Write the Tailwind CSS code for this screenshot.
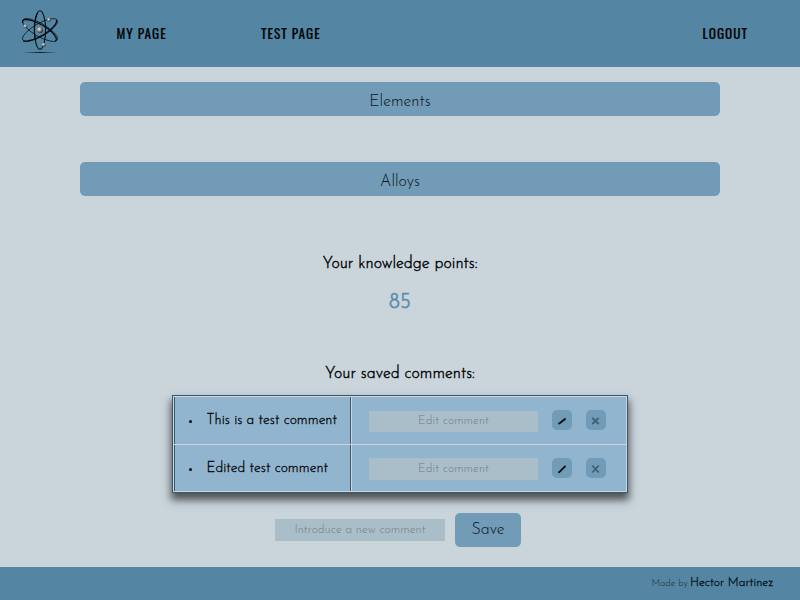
<!DOCTYPE html>
<html lang="en">
<head>
<meta charset="utf-8">
<title>My page</title>
<script src="https://cdn.jsdelivr.net/npm/@tailwindcss/browser@4"></script>
</head>
<body class="w-[800px] h-[600px] overflow-hidden bg-[#c9d4db] text-black font-['Josefin_Sans',Lato,sans-serif] font-light flex flex-col">
<header class="h-[67px] shrink-0 bg-[#5486a3] flex items-center pl-[20px] pr-[52px] font-['Oswald','Roboto',sans-serif] text-[13.33px] font-normal leading-[20px]">
  <svg class="w-[40px] h-[48px] mb-[4px] shrink-0" viewBox="0 0 40 48" fill="none">
    <defs>
      <radialGradient id="ball" cx=".35" cy=".35" r=".7"><stop offset="0" stop-color="#eee"/><stop offset=".5" stop-color="#888"/><stop offset="1" stop-color="#252525"/></radialGradient>
      <radialGradient id="shade"><stop offset="0" stop-color="#101c24"/><stop offset="1" stop-color="#101c24" stop-opacity="0"/></radialGradient>
    </defs>
    <ellipse cx="20" cy="44.5" rx="18" ry="1" fill="url(#shade)"/>
    <g stroke="#050b10">
      <ellipse cx="20" cy="22" rx="5.6" ry="19.3" stroke-width="1.1"/>
      <ellipse cx="20" cy="22" rx="6.5" ry="19.8" stroke-width=".7" transform="rotate(60 20 22)"/>
      <ellipse cx="20" cy="22" rx="6.5" ry="19.8" stroke-width=".7" transform="rotate(-60 20 22)"/>
      <path d="M15.5 32C13.5 25 14 12 17.5 5M3 12C9 10 22 16 29 21.5S38 33 35 33M3 15C1 10 8 11 13 13M3 33C10 34 23 28 29 23S38 13 36 12" stroke-width="1.2"/>
    </g>
    <circle cx="20" cy="22" r="3.1" fill="url(#ball)"/>
    <circle cx="29" cy="11.8" r="2" fill="url(#ball)"/>
    <circle cx="5.5" cy="18.3" r="2" fill="url(#ball)"/>
    <circle cx="23.8" cy="36.8" r="2" fill="url(#ball)"/>
  </svg>
  <nav class="flex flex-1 items-center pl-[56.5px] pb-[1px] tracking-[1px] whitespace-nowrap [-webkit-text-stroke:.2px_black]">
    <a class="block w-[144.5px]">MY PAGE</a>
    <a class="block">TEST PAGE</a>
    <a class="ml-auto block">LOGOUT</a>
  </nav>
</header>
<main class="h-[500px] shrink-0 flex flex-col items-center pt-[15px]">
  <button class="w-[640px] h-[34px] rounded-[5px] bg-[#719bb7] text-[16px] leading-[32px] pt-[4px] text-[#0b1217]">Elements</button>
  <button class="mt-[46px] w-[640px] h-[34px] rounded-[5px] bg-[#719bb7] text-[16px] leading-[32px] pt-[4px] text-[#0b1217]">Alloys</button>
  <h2 class="mt-[58px] h-[20px] text-[16px] leading-[20px] [-webkit-text-stroke:.4px_black]">Your knowledge points:</h2>
  <p class="mt-[17px] h-[24px] text-[21px] leading-[24px] text-[#5f8dac] [-webkit-text-stroke:.7px_#5f8dac]">85</p>
  <h2 class="mt-[49px] h-[20px] text-[16px] leading-[20px] [-webkit-text-stroke:.4px_black]">Your saved comments:</h2>
  <section class="mt-[11px] w-[456px] h-[98px] border border-[#39586b] bg-[#cad5dc] p-px grid grid-rows-[47px_46px] gap-y-px shadow-[0_6px_8px_1px_rgba(0,0,0,0.62)] shrink-0">
    <div class="flex gap-px">
      <div class="w-[177px] border-x border-[#39586b] bg-[#91b5cf] flex items-center pl-[14px]">
        <span class="size-[3px] rounded-full bg-black mt-[2px]"></span><span class="ml-[14.6px] pt-[2px] text-[13.85px] whitespace-nowrap [-webkit-text-stroke:.3px_black]">This is a test comment</span>
      </div>
      <div class="flex-1 bg-[#91b5cf] flex items-start pt-[13px] pl-[17px]">
        <div class="mt-px w-[169px] h-[21px] bg-[#aabeca] text-center text-[12px] leading-[20px] text-[#757c81]">Edit comment</div>
        <button class="ml-[14px] size-[20px] rounded-[5px] bg-[#719bb7] flex items-center justify-center"><svg class="size-[10px] mt-[2px]" viewBox="0 0 10 10" fill="none"><path d="M2 7.5 3 7 8 2.9" stroke="#080c0e" stroke-width="1.9" stroke-linecap="round"/></svg></button>
        <button class="ml-[14px] size-[20px] rounded-[5px] bg-[#719bb7] flex items-center justify-center"><svg class="size-[10px] mt-[2px]" viewBox="0 0 10 10" fill="none"><path d="M1.3 1.8 7.7 8M7.7 1.8 1.3 8" stroke="#3c6076" stroke-width="1.8"/></svg></button>
      </div>
    </div>
    <div class="flex gap-px">
      <div class="w-[177px] border-x border-[#39586b] bg-[#91b5cf] flex items-center pl-[14px]">
        <span class="size-[3px] rounded-full bg-black mt-[2px]"></span><span class="ml-[14.6px] pt-[2px] text-[13.85px] whitespace-nowrap [-webkit-text-stroke:.3px_black]">Edited test comment</span>
      </div>
      <div class="flex-1 bg-[#91b5cf] flex items-start pt-[13px] pl-[17px]">
        <div class="w-[169px] h-[22px] bg-[#aabeca] text-center text-[12px] leading-[23px] text-[#757c81]">Edit comment</div>
        <button class="ml-[14px] size-[20px] rounded-[5px] bg-[#719bb7] flex items-center justify-center"><svg class="size-[10px] mt-px" viewBox="0 0 10 10" fill="none"><path d="M2 8.2 3 7.4 8 2.4" stroke="#080c0e" stroke-width="1.9" stroke-linecap="round"/></svg></button>
        <button class="ml-[14px] size-[20px] rounded-[5px] bg-[#719bb7] flex items-center justify-center"><svg class="size-[10px] mt-px" viewBox="0 0 10 10" fill="none"><path d="M1.3 1.5 7.7 8.5M7.7 1.5 1.3 8.5" stroke="#3c6076" stroke-width="1.8"/></svg></button>
      </div>
    </div>
  </section>
  <form class="mt-[20px] h-[34px] w-[250px] flex items-center gap-[10px]">
    <div class="w-[170px] h-[22px] bg-[#aabeca] text-center text-[12px] leading-[23px] text-[#757c81]">Introduce a new comment</div>
    <button type="button" class="w-[66px] shrink-0 h-[34px] rounded-[5px] bg-[#719bb7] text-[16px] leading-[32px] text-[#0b1217]">Save</button>
  </form>
</main>
<footer class="h-[33px] shrink-0 bg-[#5486a3] flex justify-end items-baseline pr-[27px] pt-[7px] leading-[18px]">
  <span class="text-[9.5px] text-[#1b2c36]">Made by</span><span class="ml-[2px] text-[12px] text-[#07141e] [-webkit-text-stroke:.35px_#07141e]">Hector Martinez</span>
</footer>
</body>
</html>
